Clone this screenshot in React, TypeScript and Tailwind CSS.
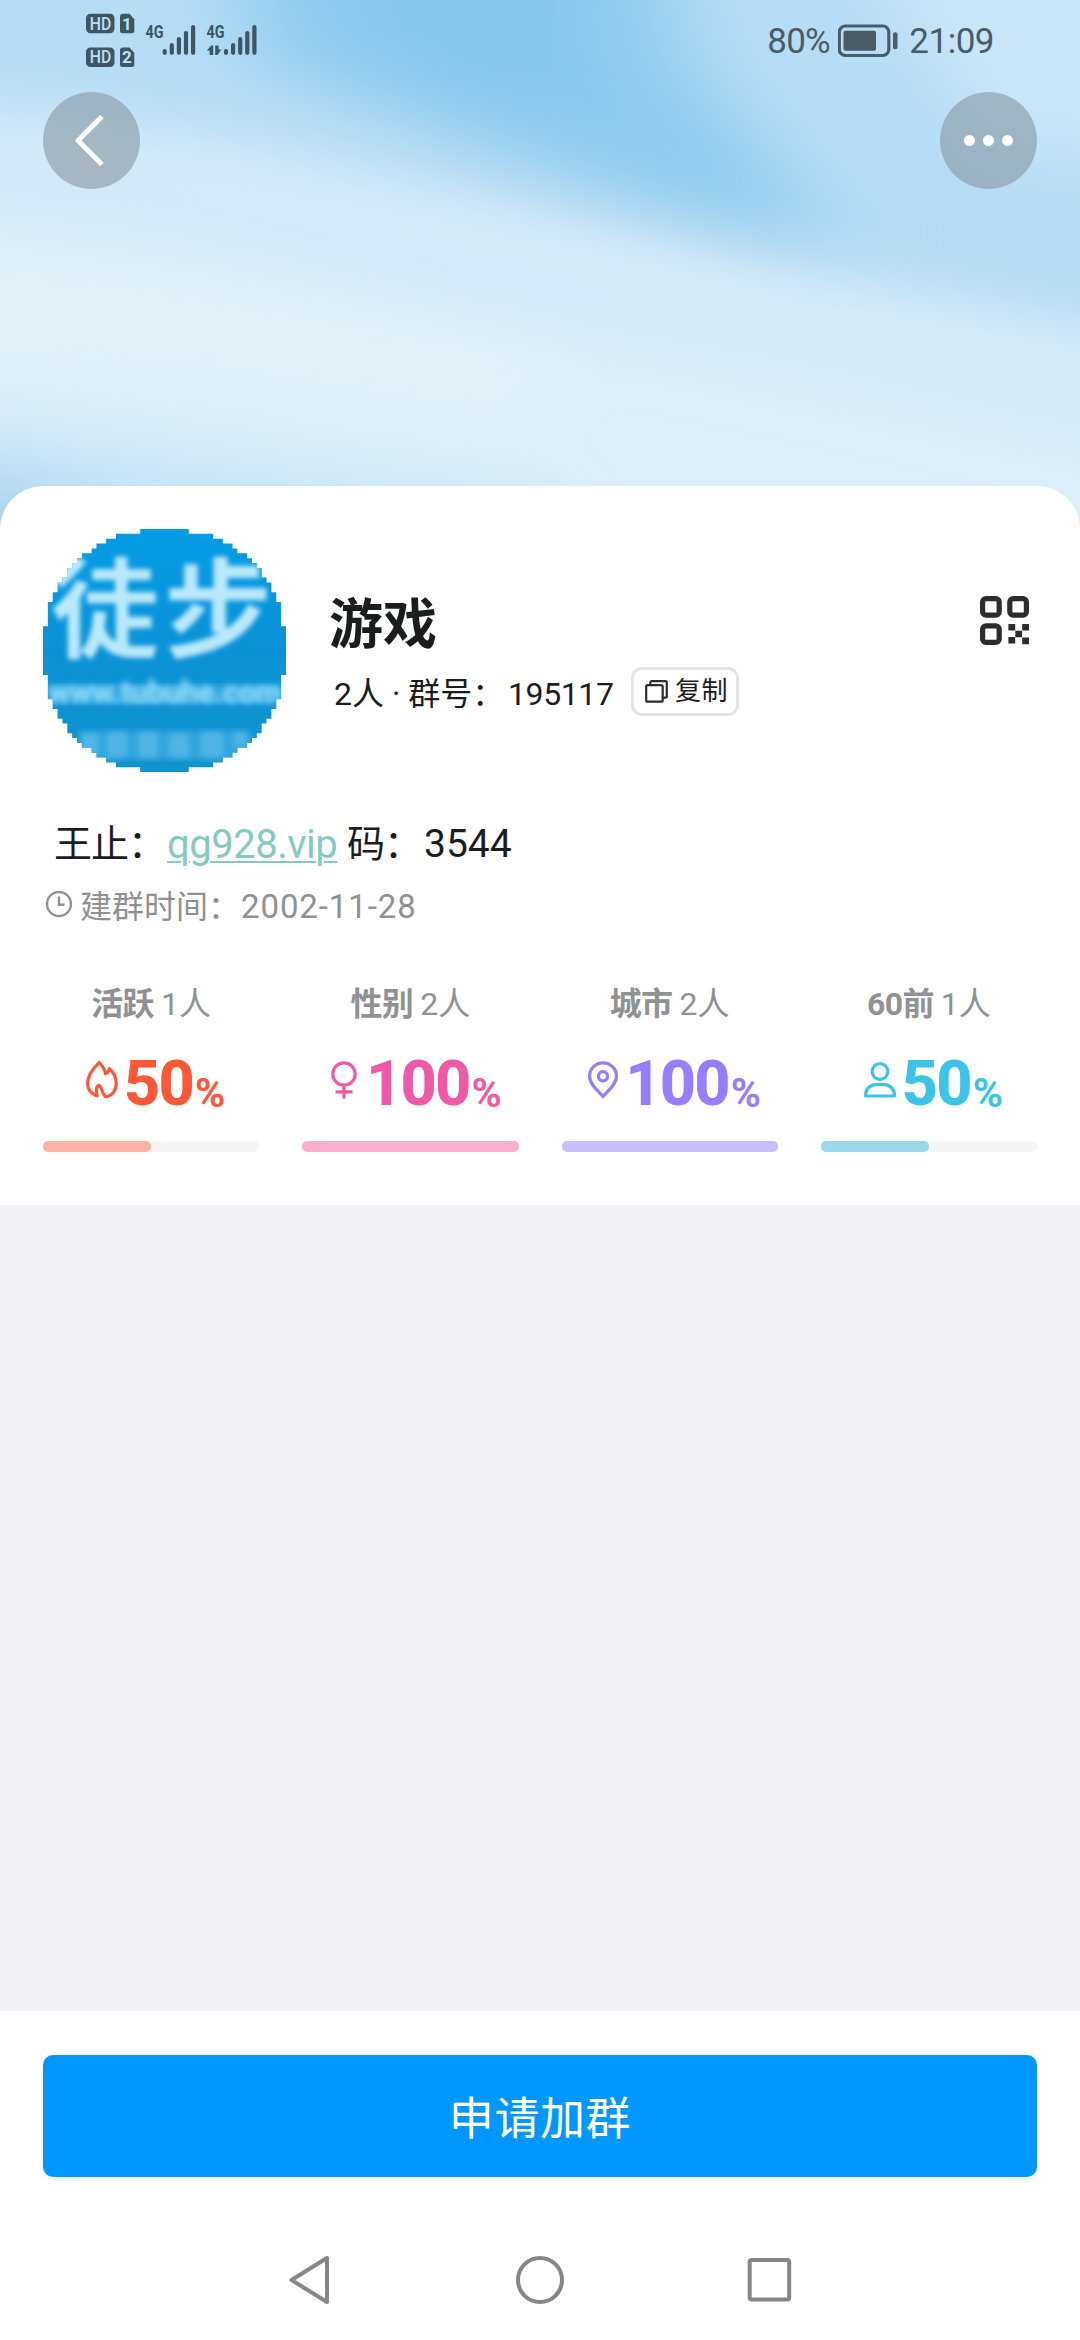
import { FC, ReactNode } from "react";

const SkyCover: FC = () => (
  <svg
    className="absolute inset-0 h-full w-full"
    viewBox="0 0 1080 540"
    preserveAspectRatio="none"
  >
    <defs>
      <filter id="soft" x="-30%" y="-50%" width="160%" height="200%">
        <feGaussianBlur stdDeviation="30" />
      </filter>
      <filter id="wide" x="-50%" y="-80%" width="200%" height="260%">
        <feGaussianBlur stdDeviation="50 28" />
      </filter>
    </defs>
    <rect width="1080" height="540" fill="#dceef7" />
    <g filter="url(#soft)">
      <path d="M-200 120L0 145L200 180L400 225L600 275L800 325L1300 430V480L800 370L500 310L200 240L-200 185Z" fill="#d1e7f8" />
      <path d="M-200 -200H1300V385L1080 328L800 272L600 224L400 180L200 138L0 112L-200 100Z" fill="#b6ddf6" />
      <path d="M-200 260L150 300L560 370L500 400L200 350L-200 325Z" fill="#e7f2f8" />
      <path d="M-200 420L0 430L300 475L560 510L500 640H-200Z" fill="#c6e3f7" />
      <path d="M-200 480L0 480L130 520V640H-200Z" fill="#a8d4f1" />
      <path d="M860 225L1080 270L1300 300V340L1080 290L860 250Z" fill="#b0daf2" />
      <path d="M800 -120H1300V180L1000 150Z" fill="#c8e6f8" />
    </g>
    <g filter="url(#wide)">
      <path d="M200 -160H640L690 60L780 170L850 250L640 200L440 130L260 65Z" fill="#8fcbef" />
      <path d="M330 -160H560L570 70L600 130L480 90L380 40Z" fill="#86c7ee" />
    </g>
  </svg>
);

const SignalBars: FC<{ x: number }> = ({ x }) => (
  <g stroke="#3d5663" strokeWidth="4.2" strokeLinecap="round">
    <path
      d={`M${x} 51.2V52.8M${x + 7.1} 45V52.8M${x + 14.2} 39V52.8M${x + 21.3} 33V52.8M${x + 28.4} 27V52.8`}
    />
  </g>
);

const HdBadge: FC<{ y: number; sim: string }> = ({ y, sim }) => (
  <g fontFamily="Roboto, sans-serif" fontWeight="500" fill="#bfe0f2">
    <rect x="86" y={y} width="28.5" height="19.5" rx="4.5" fill="#3d5663" />
    <text x="89.7" y={y + 15.8} fontSize="18" textLength="21.5" lengthAdjust="spacingAndGlyphs">
      HD
    </text>
    <path
      d={`M123 ${y}H129.5L134.3 ${y + 5.5}V${y + 17}Q134.3 ${y + 19.5} 131.8 ${y + 19.5}H122.5Q120 ${y + 19.5} 120 ${y + 17}V${y + 3}Q120 ${y} 123 ${y}Z`}
      fill="#3d5663"
    />
    <text x="127" y={y + 15.9} fontSize="17" fontWeight="700" textAnchor="middle">
      {sim}
    </text>
  </g>
);

const StatusBar: FC = () => (
  <div className="flex h-[80px] justify-between text-[35px] leading-[84px] text-[#4a5c66]">
    <svg width="270" height="80" viewBox="0 0 270 80">
      <HdBadge y={13.7} sim="1" />
      <HdBadge y={47.5} sim="2" />
      <g fontFamily="Roboto, sans-serif" fontWeight="700" fontSize="18.5" fill="#3d5663">
        <text x="145.5" y="37.8" textLength="18" lengthAdjust="spacingAndGlyphs">
          4G
        </text>
        <text x="206.5" y="37.8" textLength="18" lengthAdjust="spacingAndGlyphs">
          4G
        </text>
      </g>
      <SignalBars x={164.7} />
      <SignalBars x={226} />
      <path d="M206.8 50.5L211.2 45.5H213.2V55H209.6V50.5ZM215.2 45.5H218.6V49.5H221.4L217.4 55H215.2Z" fill="#3d5663" />
    </svg>
    <div className="flex pr-[86px]">
      <span className="w-[71px] tracking-[-0.8px]">80%</span>
      <svg width="62" height="80" viewBox="0 0 62 80">
        <rect x="1.3" y="26" width="49.5" height="29.5" rx="6" fill="none" stroke="#4a5c66" strokeWidth="3.2" />
        <rect x="5.5" y="30.7" width="32.5" height="20" rx="2" fill="#4a5c66" />
        <rect x="55" y="32.3" width="4.5" height="17" rx="2" fill="#4a5c66" />
      </svg>
      <span className="pl-[9px] tracking-[-0.5px]">21:09</span>
    </div>
  </div>
);

const TopBar: FC = () => (
  <div className="mt-[12px] flex justify-between px-[43px]">
    <button className="flex size-[97px] items-center justify-center rounded-full bg-[#8796a0]/60">
      <svg
        width="97"
        height="97"
        viewBox="0 0 97 97"
        fill="none"
        stroke="#fff"
        strokeWidth="5"
        strokeLinejoin="round"
      >
        <path d="M59 24.5L35 48.5L59 72.5" />
      </svg>
    </button>
    <button className="flex size-[97px] items-center justify-center gap-[8px] rounded-full bg-[#8796a0]/60">
      <span className="size-[11px] rounded-full bg-white" />
      <span className="size-[11px] rounded-full bg-white" />
      <span className="size-[11px] rounded-full bg-white" />
    </button>
  </div>
);

// half width of every pixel row from the top edge to the middle of a 50px disc
const halfRows = [
  5, 10, 12, 14, 15, 17, 18, 19, 20, 20, 21, 22, 22, 23, 23, 24, 24, 24, 24, 24,
  25, 25, 25, 25, 25,
];
const discPath = [...halfRows, ...[...halfRows].reverse()]
  .map((w, i) => `M${25 - w} ${i}h${w * 2}v1.02h-${w * 2}z`)
  .join("");

const Avatar: FC = () => (
  <svg className="size-[243px]" viewBox="0 0 243 243">
    <defs>
      <linearGradient id="disc" x1="0" y1="0" x2="0" y2="1">
        <stop offset="0" stopColor="#059ce6" />
        <stop offset="0.5" stopColor="#0b92d6" />
        <stop offset="1" stopColor="#1093cf" />
      </linearGradient>
      <clipPath id="steps">
        <path d={discPath} transform="scale(4.86)" />
      </clipPath>
      <filter id="b1">
        <feGaussianBlur stdDeviation="2.6" />
      </filter>
      <filter id="b2">
        <feGaussianBlur stdDeviation="3.2" />
      </filter>
    </defs>
    <g clipPath="url(#steps)">
      <rect width="243" height="243" fill="url(#disc)" />
      <text
        x="8"
        y="120"
        fontSize="108"
        letterSpacing="5"
        fontFamily="'Noto Sans CJK SC', sans-serif"
        fontWeight="700"
        fill="#b9e9fb"
        filter="url(#b1)"
      >
        徒步
      </text>
      <rect x="8" y="156" width="227" height="18" fill="#3fb0e6" opacity="0.7" filter="url(#b2)" />
      <text
        x="5"
        y="174"
        fontSize="31"
        fontFamily="Roboto, sans-serif"
        fontWeight="900"
        fill="#93dcf8"
        textLength="234"
        filter="url(#b2)"
      >
        www.tubuhe.com
      </text>
      <g filter="url(#b2)" fill="#5cbdea">
        <path d="M38 204h18v26H38zM64 202h20v28H64zM95 202h20v28H95zM126 204h20v26h-20zM158 202h22v28h-22zM190 202h16v16h-16z" opacity="0.7" />
        <path d="M36 202h170v28H36z" opacity="0.4" />
      </g>
    </g>
  </svg>
);

const QrIcon: FC = () => (
  <svg width="49" height="49" viewBox="0 0 49 49" fill="none" stroke="#2b2c30" strokeWidth="5.2">
    <rect x="2.6" y="2.6" width="16.6" height="16.6" rx="3.5" />
    <rect x="29.8" y="2.6" width="16.6" height="16.6" rx="3.5" />
    <rect x="2.6" y="29.8" width="16.6" height="16.6" rx="3.5" />
    <path
      stroke="none"
      fill="#2b2c30"
      d="M28.4 28h6.8v6.6h-6.8zM42.2 28H49v6.6h-6.8zM35.3 34.7h6.8v6.6h-6.8zM28.4 41h6.8v6.6h-6.8zM42.2 41.5H49v6.8h-6.8z"
    />
  </svg>
);

const GroupHeader: FC = () => (
  <div className="flex h-[243px] items-start">
    <Avatar />
    <div className="flex-1 pt-[67px] pl-[43px]">
      <h1 className="text-[54px] leading-[60px] font-bold text-[#1a1c1e]">游戏</h1>
      <div className="mt-[11px] flex h-[49px] pl-[5px] text-[32px] leading-[54px] text-[#1a1c1e]">
        <span className="w-[174px] whitespace-nowrap">2人 · 群号：</span>
        <span className="w-[123px] tracking-[-0.4px]">195117</span>
        <button className="flex h-[49px] w-[108px] items-center rounded-[11px] border-3 border-[#e4e4e4] pl-[11px] text-[26px]">
          <svg width="23" height="23" viewBox="0 0 23 23" fill="none" stroke="#2b2c30" strokeWidth="2.2">
            <rect x="1.2" y="5.2" width="16.5" height="16.5" rx="1.5" />
            <path d="M5.3 5V2.6Q5.3 1.2 6.7 1.2H20.4Q21.8 1.2 21.8 2.6V16.3Q21.8 17.7 20.4 17.7H18" />
          </svg>
          <span className="pl-[7px] leading-[45px] tracking-[0.5px] whitespace-nowrap">复制</span>
        </button>
      </div>
    </div>
    <button className="mt-[67px] mr-[8px]">
      <QrIcon />
    </button>
  </div>
);

const FlameIcon: FC = () => (
  <path d="M15.3 2.5C11.5 6.5 3.8 13 3.6 23C3.6 29.5 7.5 34 13.2 36C11.8 31 12.2 26.5 14.8 25.2C17.8 26.5 17.6 32.5 21.6 37C28.5 36 32.6 30 32.2 22.5C32 16.5 28.8 11.8 25.4 8.6C25 11.4 23.6 13.2 21.4 13.6C21.2 9.4 18.2 6 15.3 2.5Z" />
);

const FemaleIcon: FC = () => (
  <>
    <circle cx="18" cy="14" r="11.2" />
    <path d="M18 25.5V38.5M9.5 31.8H26.5" />
  </>
);

const PinIcon: FC = () => (
  <>
    <path d="M18 36.5C13 31 4.6 24.5 4.6 16.2A13.4 13.4 0 0 1 31.4 16.2C31.4 24.5 23 31 18 36.5Z" />
    <circle cx="18" cy="16.3" r="4.6" />
  </>
);

const PersonIcon: FC = () => (
  <>
    <circle cx="18" cy="11.5" r="7.8" />
    <path d="M3.5 36C3.2 29 8.5 24.6 13.5 24.6H22.5C27.5 24.6 32.8 29 32.5 36Z" />
  </>
);

type Stat = {
  label: string;
  count: string;
  value: number;
  icon: ReactNode;
  text: string;
  bar: string;
};

const stats: Stat[] = [
  { label: "活跃", count: "1人", value: 50, icon: <FlameIcon />, text: "text-[#fc5838]", bar: "bg-[#feb3a6]" },
  { label: "性别", count: "2人", value: 100, icon: <FemaleIcon />, text: "text-[#ee5aa6]", bar: "bg-[#fcaecf]" },
  { label: "城市", count: "2人", value: 100, icon: <PinIcon />, text: "text-[#967efa]", bar: "bg-[#c9bdfb]" },
  { label: "60前", count: "1人", value: 50, icon: <PersonIcon />, text: "text-[#3cc3e9]", bar: "bg-[#9bd9ea]" },
];

const StatItem: FC<{ stat: Stat }> = ({ stat }) => (
  <div>
    <div className="flex justify-center gap-[7px] text-[32px] leading-[40px] whitespace-nowrap text-[#8f9193]">
      <span className="font-bold tracking-[-0.7px]">{stat.label}</span>
      <span>{stat.count}</span>
    </div>
    <div className={`mt-[27px] flex h-[64px] justify-center pl-[7px] ${stat.text}`}>
      <svg
        className="mt-[9px] mr-[4px] shrink-0"
        width="36"
        height="40"
        viewBox="0 0 36 40"
        fill="none"
        stroke="currentColor"
        strokeWidth="3.2"
        strokeLinejoin="round"
      >
        {stat.icon}
      </svg>
      <span className="text-[63px] leading-[65px] font-extrabold tracking-[-1.8px]">{stat.value}</span>
      <span className="pt-[11px] pl-[2px] text-[41px] leading-[63px] font-bold">%</span>
    </div>
    <div className="mt-[26px] h-[11px] rounded-[5px] bg-[#f5f5f5]">
      <div className={`h-full rounded-[5px] ${stat.bar}`} style={{ width: `${stat.value}%` }} />
    </div>
  </div>
);

const GroupCard: FC = () => (
  <div className="relative -mt-[54px] h-[719px] rounded-t-[43px] bg-white px-[43px] pt-[43px]">
    <GroupHeader />
    <div className="mt-[44px] flex pl-[11px] text-[38px] leading-[57px] whitespace-nowrap text-[#1a1c1e]">
      <span className="w-[113px] tracking-[-1px]">王止：</span>
      <a
        href="#"
        className="w-[170px] text-[40px] tracking-[-0.5px] text-[#85cac1] underline decoration-2 underline-offset-[3px]"
      >
        qg928.vip
      </a>
      <span className="w-[87px] pl-[10px] tracking-[-1px]">码：</span>
      <span className="text-[39px]">3544</span>
    </div>
    <div className="mt-[13px] flex text-[33px] leading-[42px] whitespace-nowrap text-[#8f9193]">
      <svg className="mt-[4px] ml-[2px]" width="28" height="28" viewBox="0 0 28 28" fill="none" stroke="#8f9193" strokeWidth="2.4">
        <circle cx="14" cy="14" r="12" />
        <path d="M14 6.5V14.8H19.5" />
      </svg>
      <span className="w-[168px] pl-[7px] text-[32px]">建群时间：</span>
      <span className="tracking-[0.9px]">2002-11-28</span>
    </div>
    <div className="mt-[56px] grid grid-cols-4 gap-[43px]">
      {stats.map((stat) => (
        <StatItem key={stat.label} stat={stat} />
      ))}
    </div>
  </div>
);

const NavigationBar: FC = () => (
  <div className="flex h-[120px] items-center justify-center gap-[179px]">
    <svg width="50" height="52" viewBox="0 0 50 52" fill="none" stroke="#868686" strokeWidth="4" strokeLinejoin="round">
      <path d="M41 4V48L5.5 26Z" />
    </svg>
    <svg width="50" height="52" viewBox="0 0 50 52" fill="none" stroke="#868686" strokeWidth="4">
      <circle cx="25" cy="26" r="22" />
    </svg>
    <svg width="50" height="52" viewBox="0 0 50 52" fill="none" stroke="#868686" strokeWidth="4">
      <rect x="5.7" y="6" width="39.5" height="39.5" rx="2" />
    </svg>
  </div>
);

const App: FC = () => {
  return (
    <div className="flex h-[2340px] w-[1080px] flex-col overflow-hidden bg-[#f2f2f7] font-[Roboto,'Noto_Sans_CJK_SC',sans-serif]">
      <div className="relative h-[540px] shrink-0 overflow-hidden">
        <SkyCover />
        <div className="relative">
          <StatusBar />
          <TopBar />
        </div>
      </div>
      <GroupCard />
      <div className="mt-auto h-[329px] bg-white pt-[44px]">
        <button className="mx-[43px] block h-[122px] w-[994px] rounded-[10px] bg-[#0098ff] text-[45px] leading-[130px] tracking-[0.6px] text-white">
          申请加群
        </button>
        <div className="h-[43px]" />
        <NavigationBar />
      </div>
    </div>
  );
};

export default App;
